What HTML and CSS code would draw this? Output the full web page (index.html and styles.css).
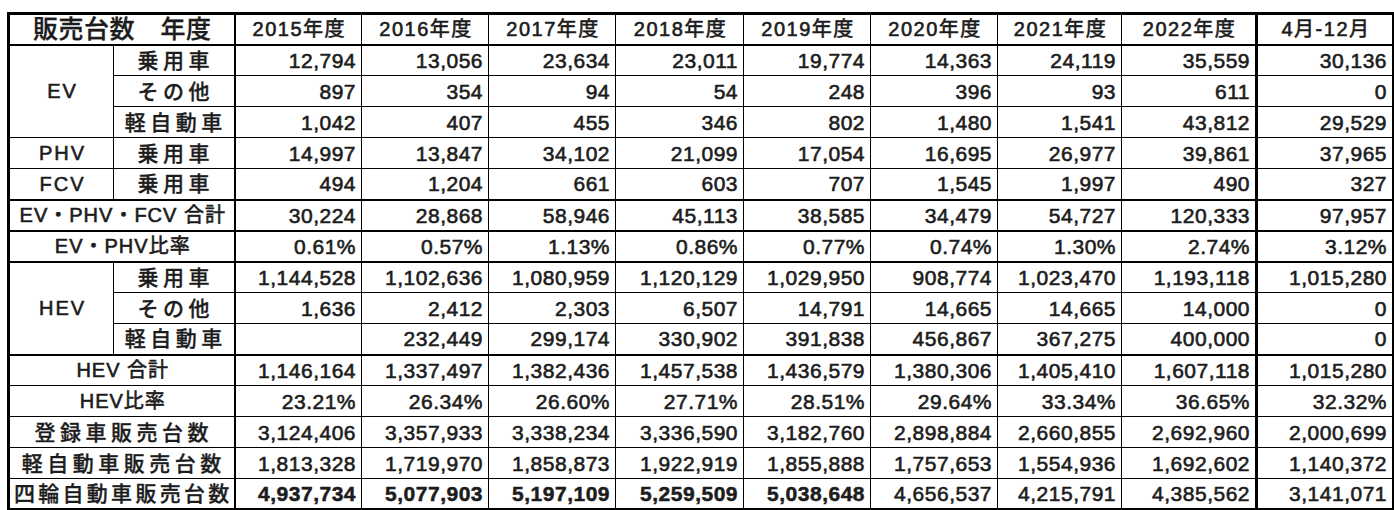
FILE: index.html
```html
<!DOCTYPE html>
<html lang="ja">
<head>
<meta charset="utf-8">
<title>販売台数</title>
<link rel="stylesheet" href="styles.css">
</head>
<body>
<table class="sales">
  <colgroup>
    <col class="w-a"><col class="w-b">
    <col class="w-y1"><col class="w-y2"><col class="w-y3"><col class="w-y4"><col class="w-y5">
    <col class="w-y6"><col class="w-y7"><col class="w-y8"><col class="w-y9">
  </colgroup>
  <thead>
    <tr class="head">
      <th colspan="2" class="title cat">販売台数　年度</th>
      <th>2015年度</th><th>2016年度</th><th>2017年度</th><th>2018年度</th><th>2019年度</th>
      <th>2020年度</th><th>2021年度</th><th class="pre-last">2022年度</th><th>4月-12月</th>
    </tr>
  </thead>
  <tbody>
    <tr>
      <td rowspan="3" class="lat">EV</td><td class="kj cat">乗用車</td>
      <td>12,794</td><td>13,056</td><td>23,634</td><td>23,011</td><td>19,774</td><td>14,363</td><td>24,119</td><td class="pre-last">35,559</td><td>30,136</td>
    </tr>
    <tr>
      <td class="kj cat">その他</td>
      <td>897</td><td>354</td><td>94</td><td>54</td><td>248</td><td>396</td><td>93</td><td class="pre-last">611</td><td>0</td>
    </tr>
    <tr>
      <td class="kj cat">軽自動車</td>
      <td>1,042</td><td>407</td><td>455</td><td>346</td><td>802</td><td>1,480</td><td>1,541</td><td class="pre-last">43,812</td><td>29,529</td>
    </tr>
    <tr>
      <td class="lat">PHV</td><td class="kj cat">乗用車</td>
      <td>14,997</td><td>13,847</td><td>34,102</td><td>21,099</td><td>17,054</td><td>16,695</td><td>26,977</td><td class="pre-last">39,861</td><td>37,965</td>
    </tr>
    <tr>
      <td class="lat">FCV</td><td class="kj cat">乗用車</td>
      <td>494</td><td>1,204</td><td>661</td><td>603</td><td>707</td><td>1,545</td><td>1,997</td><td class="pre-last">490</td><td>327</td>
    </tr>
    <tr class="thick-top">
      <td colspan="2" class="mix cat">EV・PHV・FCV 合計</td>
      <td>30,224</td><td>28,868</td><td>58,946</td><td>45,113</td><td>38,585</td><td>34,479</td><td>54,727</td><td class="pre-last">120,333</td><td>97,957</td>
    </tr>
    <tr class="thick-top">
      <td colspan="2" class="mix cat">EV・PHV比率</td>
      <td>0.61%</td><td>0.57%</td><td>1.13%</td><td>0.86%</td><td>0.77%</td><td>0.74%</td><td>1.30%</td><td class="pre-last">2.74%</td><td>3.12%</td>
    </tr>
    <tr class="thick-top">
      <td rowspan="3" class="lat">HEV</td><td class="kj cat">乗用車</td>
      <td>1,144,528</td><td>1,102,636</td><td>1,080,959</td><td>1,120,129</td><td>1,029,950</td><td>908,774</td><td>1,023,470</td><td class="pre-last">1,193,118</td><td>1,015,280</td>
    </tr>
    <tr>
      <td class="kj cat">その他</td>
      <td>1,636</td><td>2,412</td><td>2,303</td><td>6,507</td><td>14,791</td><td>14,665</td><td>14,665</td><td class="pre-last">14,000</td><td>0</td>
    </tr>
    <tr>
      <td class="kj cat">軽自動車</td>
      <td></td><td>232,449</td><td>299,174</td><td>330,902</td><td>391,838</td><td>456,867</td><td>367,275</td><td class="pre-last">400,000</td><td>0</td>
    </tr>
    <tr class="thick-top">
      <td colspan="2" class="mix cat">HEV 合計</td>
      <td>1,146,164</td><td>1,337,497</td><td>1,382,436</td><td>1,457,538</td><td>1,436,579</td><td>1,380,306</td><td>1,405,410</td><td class="pre-last">1,607,118</td><td>1,015,280</td>
    </tr>
    <tr>
      <td colspan="2" class="mix cat">HEV比率</td>
      <td>23.21%</td><td>26.34%</td><td>26.60%</td><td>27.71%</td><td>28.51%</td><td>29.64%</td><td>33.34%</td><td class="pre-last">36.65%</td><td>32.32%</td>
    </tr>
    <tr>
      <td colspan="2" class="kj cat">登録車販売台数</td>
      <td>3,124,406</td><td>3,357,933</td><td>3,338,234</td><td>3,336,590</td><td>3,182,760</td><td>2,898,884</td><td>2,660,855</td><td class="pre-last">2,692,960</td><td>2,000,699</td>
    </tr>
    <tr>
      <td colspan="2" class="kj cat">軽自動車販売台数</td>
      <td>1,813,328</td><td>1,719,970</td><td>1,858,873</td><td>1,922,919</td><td>1,855,888</td><td>1,757,653</td><td>1,554,936</td><td class="pre-last">1,692,602</td><td>1,140,372</td>
    </tr>
    <tr>
      <td colspan="2" class="kj long cat">四輪自動車販売台数</td>
      <td class="heavy">4,937,734</td><td class="heavy">5,077,903</td><td class="heavy">5,197,109</td><td class="heavy">5,259,509</td><td class="heavy">5,038,648</td><td>4,656,537</td><td>4,215,791</td><td class="pre-last">4,385,562</td><td>3,141,071</td>
    </tr>
  </tbody>
</table>
</body>
</html>
```

FILE: styles.css
```css
html, body {
  margin: 0;
  padding: 0;
  background: #fff;
}

body {
  padding: 12px 0 0 7px;
}

.sales {
  border-collapse: collapse;
  table-layout: fixed;
  width: 1385px;
  border: 3px solid #000;
  color: #1c1c1c;
  font-family: "Liberation Sans", "Noto Sans CJK JP", sans-serif;
  font-weight: normal;
}

.w-a { width: 105px; }
.w-b { width: 121px; }
.w-y1 { width: 127px; }
.w-y2 { width: 127px; }
.w-y3 { width: 127px; }
.w-y4 { width: 128px; }
.w-y5 { width: 127px; }
.w-y6 { width: 127px; }
.w-y7 { width: 124px; }
.w-y8 { width: 135px; }
.w-y9 { width: 137px; }

.sales tr {
  height: 31px;
}

.sales th,
.sales td {
  border: 1px solid #000;
  padding: 0 5px 0 0;
  white-space: nowrap;
  overflow: hidden;
  line-height: 1;
  -webkit-text-stroke: 0.6px #1c1c1c;
}

.sales th {
  font-size: 20px;
  letter-spacing: 1.5px;
  text-align: center;
  font-weight: normal;
  padding: 0 0 0 2px;
}

.head th {
  border-bottom: 2px solid #000;
}

.sales th.title {
  font-size: 25px;
  letter-spacing: 0.5px;
  padding-left: 1px;
  font-weight: 500;
  -webkit-text-stroke: 0.3px #1c1c1c;
}

.sales td {
  font-size: 21px;
  letter-spacing: 0.5px;
  text-align: right;
}

.sales td.lat {
  font-size: 20px;
  letter-spacing: 2px;
  text-align: center;
  padding: 0 0 0 2px;
}

.sales td.kj {
  font-size: 21px;
  letter-spacing: 4.5px;
  text-align: center;
  padding: 0 0 0 4px;
  font-weight: 500;
  -webkit-text-stroke: 0.3px #1c1c1c;
}

.sales td.long {
  letter-spacing: 3.3px;
  padding-left: 3px;
}

.sales td.mix {
  font-size: 20px;
  letter-spacing: 1px;
  text-align: center;
  padding: 0 0 0 2px;
}

.sales .cat {
  border-right: 2px solid #000;
}

.sales .pre-last {
  border-right: 3px solid #000;
}

.thick-top td {
  border-top: 2px solid #000;
}

.sales td.heavy {
  font-weight: bold;
  -webkit-text-stroke: 0.5px #1c1c1c;
}
```
